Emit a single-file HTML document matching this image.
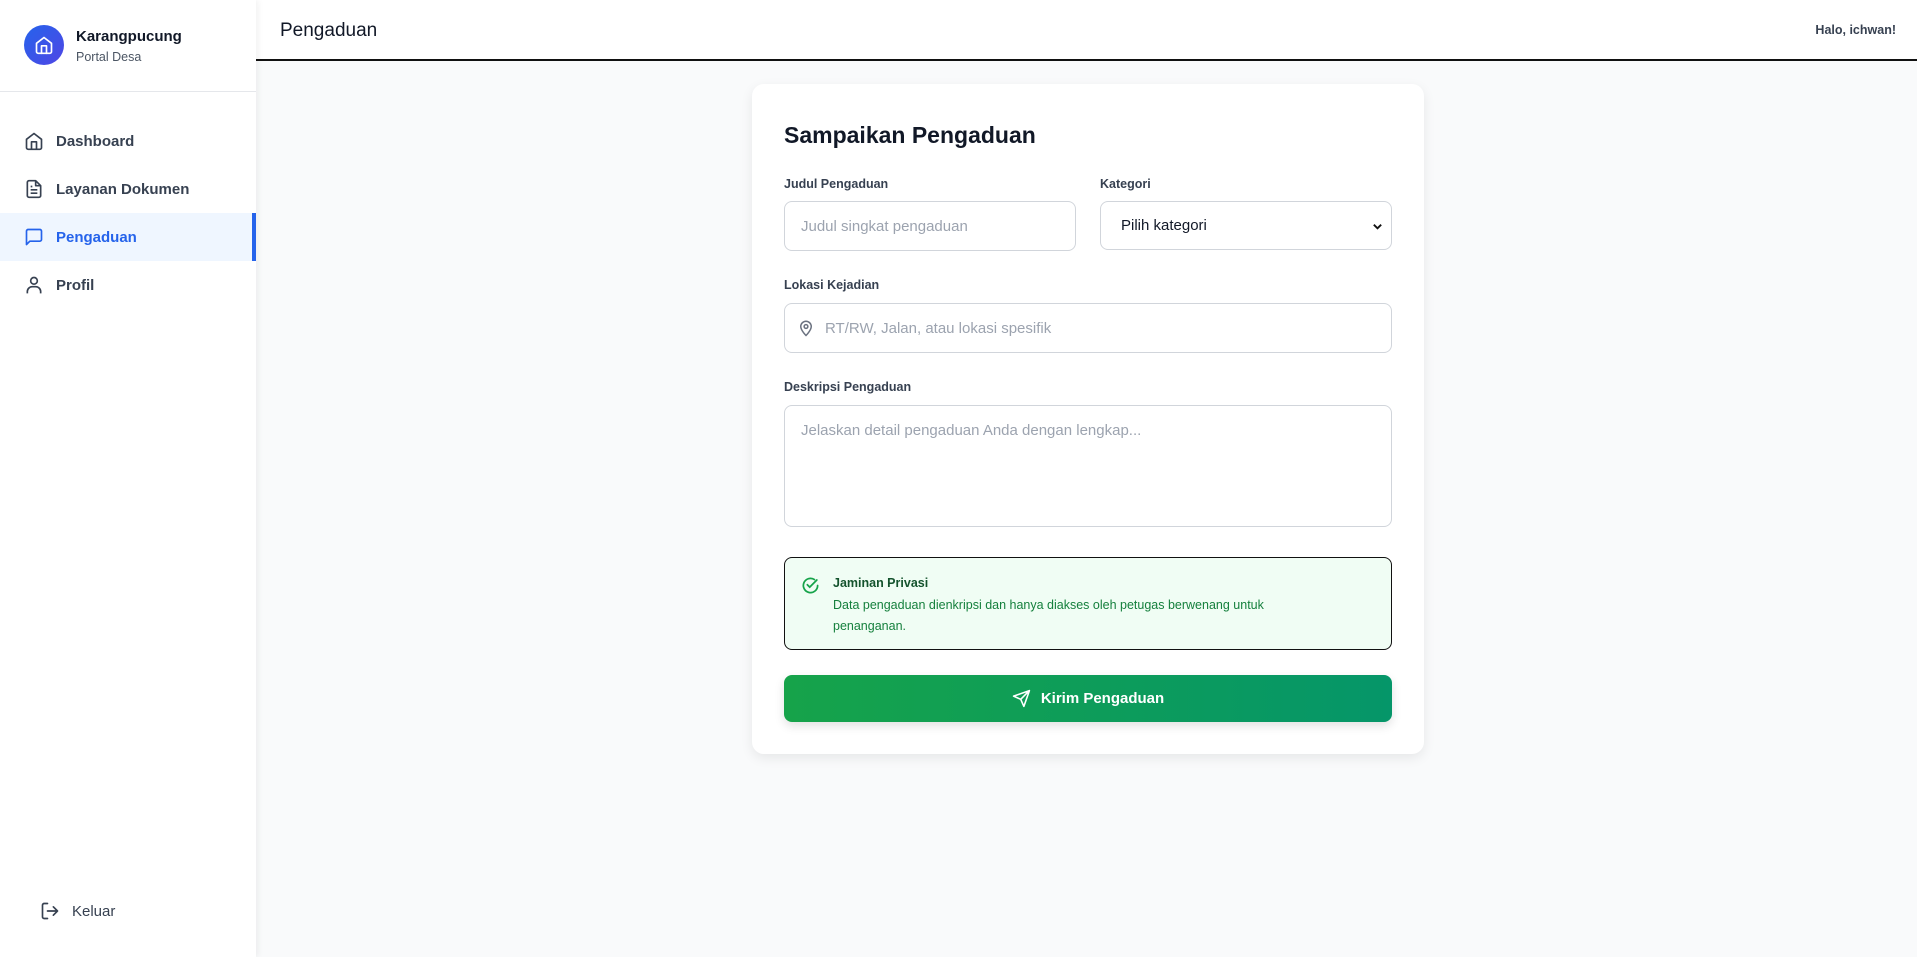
<!DOCTYPE html>
<html><head><meta charset="utf-8"><style>
*{box-sizing:border-box;margin:0;padding:0}
body{width:1917px;height:957px;overflow:hidden;background:#f9fafb;font-family:"Liberation Sans",sans-serif;color:#1f2937;position:relative}
.side{position:absolute;left:0;top:0;width:256px;height:957px;background:#fff;box-shadow:2px 0 6px rgba(0,0,0,.06);z-index:2}
.logo{position:absolute;left:24px;top:25px;width:40px;height:40px;border-radius:50%;background:linear-gradient(135deg,#2563eb,#4f46e5);display:flex;align-items:center;justify-content:center}
.brand{position:absolute;left:76px;top:28px;font-weight:bold;font-size:15px;color:#111827}
.sub{position:absolute;left:76px;top:50px;font-size:12.5px;color:#4b5563}
.div{position:absolute;left:0;top:91px;width:256px;height:1px;background:#e5e7eb}
.nav{position:absolute;left:0;width:256px;height:48px;display:flex;align-items:center;padding-left:24px;font-size:15px;color:#374151;font-weight:bold}
.nav svg{margin-right:12px}
.nav.act{background:#eff6ff;color:#2563eb;border-right:4px solid #2563eb}
.head{position:absolute;left:256px;top:0;right:0;height:61px;background:#fff;border-bottom:2px solid #111}
.head h1{position:absolute;left:24px;top:20px;font-size:19px;font-weight:normal;color:#111827}
.halo{position:absolute;right:21px;top:23px;font-size:12.5px;color:#374151;font-weight:bold}
.card{position:absolute;left:752px;top:84px;width:672px;height:670px;background:#fff;border-radius:12px;box-shadow:0 4px 12px rgba(0,0,0,.08)}
.t{position:absolute;left:32px;top:38px;font-size:23px;font-weight:bold;color:#111827}
.lb{position:absolute;font-size:12.5px;color:#374151;font-weight:bold}
.in{position:absolute;border:1px solid #d1d5db;border-radius:8px;font-size:15px;color:#9ca3af;display:flex;align-items:center;padding-left:16px}
.priv{position:absolute;left:32px;top:473px;width:608px;height:93px;border:1px solid #111;border-radius:8px;background:#f0fdf4;color:#15803d;font-size:12.5px}
.btn{position:absolute;left:32px;top:591px;width:608px;height:47px;border-radius:8px;background:linear-gradient(90deg,#16a34a,#059669);color:#fff;font-weight:bold;font-size:15px;display:flex;align-items:center;justify-content:center;box-shadow:0 4px 10px rgba(0,0,0,.12)}
</style></head><body>
<div class="side">
<div class="logo"><svg width="20" height="20" viewBox="0 0 24 24" fill="none" stroke="#fff" stroke-width="2" stroke-linecap="round" stroke-linejoin="round"><path d="M3 10l9-7 9 7v10a2 2 0 0 1-2 2H5a2 2 0 0 1-2-2z"/><path d="M9 22V13h6v9"/></svg></div>
<div class="brand">Karangpucung</div><div class="sub">Portal Desa</div>
<div class="div"></div>
<div class="nav" style="top:117px"><svg width="20" height="20" viewBox="0 0 24 24" fill="none" stroke="#374151" stroke-width="2" stroke-linejoin="round"><path d="M3 10l9-7 9 7v10a2 2 0 0 1-2 2H5a2 2 0 0 1-2-2z"/><path d="M9 22V13h6v9"/></svg>Dashboard</div>
<div class="nav" style="top:165px"><svg width="20" height="20" viewBox="0 0 24 24" fill="none" stroke="#374151" stroke-width="2" stroke-linejoin="round"><path d="M14 2H6a2 2 0 0 0-2 2v16a2 2 0 0 0 2 2h12a2 2 0 0 0 2-2V8z"/><path d="M14 2v6h6M8 13h8M8 17h8M8 9h2"/></svg>Layanan Dokumen</div>
<div class="nav act" style="top:213px"><svg width="20" height="20" viewBox="0 0 24 24" fill="none" stroke="#2563eb" stroke-width="2" stroke-linejoin="round"><path d="M21 15a2 2 0 0 1-2 2H7l-4 4V5a2 2 0 0 1 2-2h14a2 2 0 0 1 2 2z"/></svg>Pengaduan</div>
<div class="nav" style="top:261px"><svg width="20" height="20" viewBox="0 0 24 24" fill="none" stroke="#374151" stroke-width="2"><circle cx="12" cy="7" r="4"/><path d="M4 22v-2a6 6 0 0 1 6-6h4a6 6 0 0 1 6 6v2"/></svg>Profil</div>
<div class="nav" style="top:887px;padding-left:40px;font-weight:normal"><svg width="20" height="20" viewBox="0 0 24 24" fill="none" stroke="#374151" stroke-width="2" stroke-linecap="round" stroke-linejoin="round"><path d="M9 21H5a2 2 0 0 1-2-2V5a2 2 0 0 1 2-2h4M16 17l5-5-5-5M21 12H9"/></svg>Keluar</div>
</div>
<div class="head"><h1>Pengaduan</h1><div class="halo">Halo, ichwan!</div></div>
<div class="card">
<div class="t">Sampaikan Pengaduan</div>
<div class="lb" style="left:32px;top:93px">Judul Pengaduan</div>
<div class="lb" style="left:348px;top:93px">Kategori</div>
<div class="in" style="left:32px;top:117px;width:292px;height:50px">Judul singkat pengaduan</div>
<div class="in" style="left:348px;top:117px;width:292px;height:49px;color:#111827;padding-left:20px">Pilih kategori<svg style="position:absolute;right:8px;top:19px" width="11" height="11" viewBox="0 0 12 12" fill="none" stroke="#111" stroke-width="2"><path d="M2 4l4 4 4-4"/></svg></div>
<div class="lb" style="left:32px;top:194px">Lokasi Kejadian</div>
<div class="in" style="left:32px;top:219px;width:608px;height:50px;padding-left:12px"><svg width="18" height="18" viewBox="0 0 24 24" fill="none" stroke="#6b7280" stroke-width="2" style="margin-right:10px"><path d="M12 22s-7-7-7-12a7 7 0 0 1 14 0c0 5-7 12-7 12z"/><circle cx="12" cy="10" r="2.5"/></svg>RT/RW, Jalan, atau lokasi spesifik</div>
<div class="lb" style="left:32px;top:296px">Deskripsi Pengaduan</div>
<div class="in" style="left:32px;top:321px;width:608px;height:122px;align-items:flex-start;padding-top:16px">Jelaskan detail pengaduan Anda dengan lengkap...</div>
<div class="priv">
<svg style="position:absolute;left:16px;top:18px" width="19" height="19" viewBox="0 0 24 24" fill="none" stroke="#16a34a" stroke-width="2.2" stroke-linecap="round"><path d="M21 12a9 9 0 1 1-4-7.5"/><path d="M8 11l3 3 9-9"/></svg>
<div style="position:absolute;left:48px;top:18px;font-weight:bold;color:#14532d">Jaminan Privasi</div>
<div style="position:absolute;left:48px;top:37px;width:540px;line-height:21px">Data pengaduan dienkripsi dan hanya diakses oleh petugas berwenang untuk<br>penanganan.</div>
</div>
<div class="btn"><svg width="19" height="19" viewBox="0 0 24 24" fill="none" stroke="#fff" stroke-width="2" stroke-linejoin="round" style="margin-right:10px"><path d="M22 2L11 13M22 2l-7 20-4-9-9-4z"/></svg>Kirim Pengaduan</div>
</div>
</body></html>
